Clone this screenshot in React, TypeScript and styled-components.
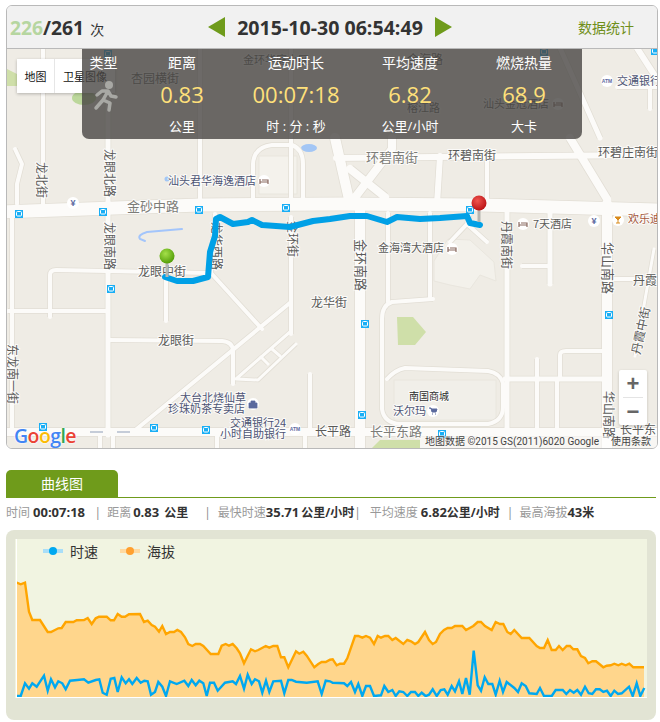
import styled, { createGlobalStyle } from "styled-components";

const FONT = `"Open Sans", "Noto Sans CJK SC", sans-serif`;
const GREEN = "#6f9b1b";

const GlobalStyle = createGlobalStyle`
  body {
    margin: 0;
    background: #fff;
    font-family: ${FONT};
    color: #333;
  }
`;

// map geometry is written in page pixels, the viewBox shifts it into the panel
const roads: { d: string; w: number }[] = [
  { d: "M0 213 L200 206 L340 205 L480 206 L660 211", w: 13 },
  { d: "M43 49 L43 205", w: 4 },
  { d: "M15 150 L22 165 L17 185 L17 205", w: 4 },
  { d: "M108 49 L108 436", w: 5 },
  { d: "M200 49 L200 205", w: 4 },
  { d: "M291 49 L291 205", w: 4 },
  { d: "M291 218 L291 335", w: 4 },
  { d: "M12 218 L12 432", w: 4 },
  { d: "M50 318 L50 276 Q50 271 56 271 L208 274", w: 4 },
  { d: "M8 312 L108 312", w: 4 },
  { d: "M166 274 L166 322", w: 4 },
  { d: "M215 215 L211 274 L262 330", w: 4 },
  { d: "M108 341 L222 342 Q233 343 233 352 L233 385", w: 4 },
  { d: "M133 433 L291 303", w: 4 },
  { d: "M291 332 L236 380 L258 381 L296 345", w: 3 },
  { d: "M261 358 L268 365 M272 350 L280 357", w: 3 },
  { d: "M310 375 L310 432", w: 4 },
  { d: "M0 433 L660 433", w: 8 },
  { d: "M100 433 L100 449 M113 433 L113 449 M217 433 L217 449 M305 433 L305 449 M480 433 L480 449", w: 4 },
  { d: "M253 205 L253 165 Q254 148 272 146 L292 146 Q303 150 303 165 L303 205", w: 4 },
  { d: "M360 205 L360 449", w: 10 },
  { d: "M335 139 L350 205", w: 10 },
  { d: "M392 139 L392 150 L350 205", w: 8 },
  { d: "M350 170 L385 198", w: 8 },
  { d: "M336 159 L650 156", w: 6 },
  { d: "M440 157 L437 205", w: 6 },
  { d: "M487 157 L487 205", w: 4 },
  { d: "M570 139 L607 200", w: 8 },
  { d: "M637 49 L657 80", w: 6 },
  { d: "M650 80 L650 110", w: 4 },
  { d: "M617 88 L660 88", w: 4 },
  { d: "M560 49 L600 139", w: 5 },
  { d: "M607 205 L607 449", w: 10 },
  { d: "M507 214 L507 449", w: 5 },
  { d: "M550 214 L550 285", w: 5 },
  { d: "M522 267 L550 267", w: 4 },
  { d: "M430 214 L430 300", w: 4 },
  { d: "M470 214 L467 225 L450 243 M467 225 L487 243", w: 4 },
  { d: "M388 214 L388 303", w: 4 },
  { d: "M433 300 L392 303 Q382 306 382 320 L382 410 Q384 424 400 425 L488 425 Q503 422 503 408 L503 384 Q500 374 488 372 L405 369 Q395 371 387 380", w: 4 },
  { d: "M505 380 L602 380", w: 5 },
  { d: "M537 360 L537 432 M557 380 L557 432", w: 4 },
  { d: "M560 380 L560 356 Q560 352 566 352 L602 352", w: 4 },
  { d: "M612 280 L657 280", w: 4 },
  { d: "M654 250 L635 357", w: 3 }
];

const route =
  "M165 278 L177 282 L193 282 L208 278 L210 253 L215 237 L216 220 L220 218 L233 225 L248 223 L252 221 L262 226 L290 228 L313 222 L330 220 L350 217 L367 217 L387 223 L397 218 L420 220 L440 219 L467 217 L470 224 L480 226";

const busStops = [
  [19, 215], [103, 213], [199, 211], [286, 209], [111, 290], [470, 211], [365, 325], [362, 416],
  [442, 435], [609, 316], [43, 428], [154, 429], [206, 431], [108, 55], [544, 53], [655, 52]
];

type PoiKind = "bank" | "bar" | "hotel" | "bag" | "cart" | "atm";

const pois: { x: number; y: number; kind: PoiKind }[] = [
  { x: 73, y: 204, kind: "bank" },
  { x: 594, y: 222, kind: "bank" },
  { x: 618, y: 221, kind: "bar" },
  { x: 264, y: 182, kind: "hotel" },
  { x: 452, y: 250, kind: "hotel" },
  { x: 523, y: 225, kind: "hotel" },
  { x: 558, y: 105, kind: "hotel" },
  { x: 253, y: 405, kind: "bag" },
  { x: 433, y: 412, kind: "cart" },
  { x: 607, y: 82, kind: "atm" },
  { x: 295, y: 430, kind: "atm" }
];

type Tone = "road" | "soft" | "poi" | "dark" | "warm";

const labels: { t: string; x: number; y: number; s: number; tone: Tone }[] = [
  { t: "杏园横街", x: 131, y: 84, s: 12, tone: "road" },
  { t: "金环华庭小区", x: 243, y: 65, s: 11, tone: "road" },
  { t: "金海路", x: 407, y: 65, s: 12, tone: "road" },
  { t: "榕江路", x: 407, y: 113, s: 11, tone: "road" },
  { t: "汕头金冠酒店", x: 483, y: 109, s: 11, tone: "road" },
  { t: "交通银行", x: 617, y: 86, s: 11, tone: "poi" },
  { t: "环碧南街", x: 366, y: 163, s: 13, tone: "soft" },
  { t: "环碧南街", x: 448, y: 161, s: 12, tone: "road" },
  { t: "环碧庄南街", x: 598, y: 158, s: 12, tone: "road" },
  { t: "汕头君华海逸酒店", x: 168, y: 186, s: 11, tone: "poi" },
  { t: "金砂中路", x: 127, y: 212, s: 13, tone: "soft" },
  { t: "龙眼中街", x: 138, y: 277, s: 12, tone: "road" },
  { t: "龙华街", x: 311, y: 308, s: 12, tone: "road" },
  { t: "龙眼街", x: 158, y: 346, s: 12, tone: "road" },
  { t: "大台北烧仙草", x: 180, y: 403, s: 11, tone: "poi" },
  { t: "珍珠奶茶专卖店", x: 168, y: 414, s: 11, tone: "poi" },
  { t: "交通银行24", x: 230, y: 428, s: 11, tone: "poi" },
  { t: "小时自助银行", x: 220, y: 439, s: 11, tone: "poi" },
  { t: "长平路", x: 315, y: 437, s: 12, tone: "road" },
  { t: "长平东路", x: 370, y: 437, s: 13, tone: "soft" },
  { t: "长平东", x: 620, y: 435, s: 12, tone: "road" },
  { t: "南国商城", x: 409, y: 401, s: 10, tone: "dark" },
  { t: "沃尔玛", x: 393, y: 416, s: 11, tone: "poi" },
  { t: "金海湾大酒店", x: 378, y: 253, s: 11, tone: "road" },
  { t: "7天酒店", x: 533, y: 229, s: 11, tone: "road" },
  { t: "欢乐迪", x: 628, y: 224, s: 11, tone: "warm" },
  { t: "丹霞", x: 633, y: 286, s: 12, tone: "road" }
];

// road names that run down the map, x is the baseline after the quarter turn
const sideLabels: { t: string; x: number; y: number; s: number }[] = [
  { t: "龙北街", x: 37, y: 163, s: 12 },
  { t: "龙眼北路", x: 105, y: 150, s: 12 },
  { t: "龙眼南路", x: 105, y: 223, s: 12 },
  { t: "金环街", x: 288, y: 222, s: 12 },
  { t: "金环南路", x: 356, y: 240, s: 13 },
  { t: "丹霞南街", x: 502, y: 222, s: 12 },
  { t: "华山南路", x: 603, y: 243, s: 13 },
  { t: "华山南路", x: 604, y: 392, s: 12 },
  { t: "东龙南一街", x: 8, y: 345, s: 12 },
  { t: "龙华西路", x: 212, y: 223, s: 12 }
];

const orangeLeft = [50,68,62,73,75,68,87,155,97,180,120,180,143,216,153,216,175,205,185,204,197,186,220,186,230,181,252,180,263,174,275,192,287,175,297,170,320,170,332,181,342,181,353,162,365,170,375,170,387,163,420,162,432,186,443,182,455,195,465,200,477,215,487,198,498,222,510,216,522,216,532,210,543,216,555,232,565,252,577,258,587,252,600,252,610,258,632,282,655,282,665,257,677,252,687,257,698,252,710,265,720,280,732,310,743,287,753,268,765,274,775,270,797,258,808,263,820,258,832,258,843,292,853,292,865,322,888,274,898,281,910,275,920,287,943,322,955,312,965,306,977,306,990,299];
const orangeRight = [8,298,20,316,30,311,42,311,52,295,75,228,85,228,97,233,108,228,120,233,132,252,143,228,153,233,165,228,175,228,187,240,197,234,220,252,232,240,243,244,255,252,265,246,285,216,297,240,308,252,318,246,330,222,342,210,353,204,365,204,375,198,397,198,408,210,430,198,443,186,453,186,465,198,485,210,497,186,510,192,520,192,532,216,542,222,553,210,575,234,598,234,620,258,630,264,642,264,653,240,665,270,677,270,687,258,698,270,710,258,720,258,730,268,742,268,753,288,765,294,775,310,787,304,798,304,820,322,830,317,842,316,853,311,865,316,875,311,887,316,898,311,910,322,942,322];
const blueLeft = [50,408,62,408,75,370,87,386,97,370,110,380,132,347,143,392,153,358,165,382,175,364,187,370,197,388,210,362,232,360,252,358,265,368,287,360,298,358,308,398,320,404,332,356,343,354,353,396,365,352,377,370,387,358,397,372,410,354,422,368,433,362,443,364,453,404,465,396,475,366,487,380,498,408,510,364,530,372,553,362,565,378,575,360,587,376,598,362,610,370,620,408,630,368,642,368,653,392,675,368,698,364,708,372,720,348,732,386,743,344,755,372,765,358,777,364,787,398,798,362,808,396,820,364,843,362,853,400,865,360,875,360,888,365,920,368,953,364,965,402,977,362,990,364];
const blueRight = [8,368,42,370,52,378,63,366,75,396,85,372,97,408,108,378,120,378,132,408,153,406,163,378,175,396,187,390,197,408,208,394,220,396,232,408,243,396,255,396,265,408,275,398,287,408,297,404,308,388,320,408,332,390,343,388,353,404,365,378,375,394,387,364,397,402,408,354,419,404,431,272,443,376,453,392,464,352,475,372,487,372,497,404,509,362,519,396,530,366,553,384,564,396,575,370,587,378,598,400,620,402,630,384,642,408,665,408,677,390,698,390,709,402,720,390,731,398,742,390,753,404,765,380,776,400,787,402,798,388,809,388,820,396,831,392,842,408,853,392,864,402,875,400,897,380,908,408,920,370,931,408,943,384];

// the curve points were read off two crops at 3x, so they come back to page pixels here
const toLine = (left: number[], right: number[]) => {
  const pts: string[] = [];
  for (let i = 0; i < left.length; i += 2) pts.push(`${(left[i] / 3).toFixed(1)} ${(560 + left[i + 1] / 3).toFixed(1)}`);
  for (let i = 0; i < right.length; i += 2) pts.push(`${(330 + right[i] / 3).toFixed(1)} ${(560 + right[i + 1] / 3).toFixed(1)}`);
  return "M" + pts.join(" L");
};

const orangeLine = toLine(orangeLeft, orangeRight);
const blueLine = toLine(blueLeft, blueRight);

const stats = [
  { title: "距离", value: "0.83", unit: "公里" },
  { title: "运动时长", value: "00:07:18", unit: "时 : 分 : 秒" },
  { title: "平均速度", value: "6.82", unit: "公里/小时" },
  { title: "燃烧热量", value: "68.9", unit: "大卡" }
];

const toneColor: Record<Tone, string> = {
  road: "#5a5a58",
  soft: "#7c7c78",
  poi: "#4d5474",
  dark: "#2c2c2c",
  warm: "#a5583c"
};

const Page = styled.div`
  width: 660px;
  height: 722px;
  box-sizing: border-box;
  padding: 5px 0 0 6px;
  overflow: hidden;
`;

const Panel = styled.section`
  width: 652px;
  box-sizing: border-box;
  border: 1px solid #b9b9b9;
  border-radius: 6px;
  overflow: hidden;
`;

const Header = styled.header`
  height: 43px;
  box-sizing: border-box;
  background: #f1f1f1;
  border-bottom: 1px solid #b9b9b9;
  display: grid;
  grid-template-columns: 150px 1fr 150px;
  align-items: center;
  padding: 0 23px 0 3px;
`;

const Count = styled.div`
  font-size: 19.3px;
  font-weight: 700;
  color: #333;
`;

const Done = styled.span`
  color: #b6d6a0;
`;

const Times = styled.span`
  font-size: 14px;
  font-weight: 400;
  margin-left: 6px;
`;

const DateNav = styled.div`
  display: flex;
  align-items: center;
  justify-content: center;
  gap: 12px;
  padding-left: 16px;
`;

const Arrow = styled.span<{ $dir: "left" | "right" }>`
  width: 0;
  height: 0;
  border-top: 10px solid transparent;
  border-bottom: 10px solid transparent;
  ${(p) => (p.$dir === "left" ? `border-right: 17px solid ${GREEN};` : `border-left: 17px solid ${GREEN};`)}
`;

const DateText = styled.div`
  font-size: 19.6px;
  font-weight: 700;
  color: #333;
  white-space: nowrap;
`;

const StatsLink = styled.div`
  font-size: 14px;
  color: #6f8f1a;
  text-align: right;
`;

const MapArea = styled.div`
  position: relative;
  height: 399px;
  overflow: hidden;
  background: #efece5;
`;

const MapCanvas = styled.svg`
  display: block;
`;

const MapText = styled.text<{ $tone: Tone; $size: number }>`
  font-family: "Noto Sans CJK SC", sans-serif;
  font-size: ${(p) => p.$size}px;
  fill: ${(p) => toneColor[p.$tone]};
  stroke: rgba(255, 255, 255, 0.75);
  stroke-width: 2px;
  paint-order: stroke;
`;

const AtmGlyph = styled.text`
  font-family: "Liberation Sans", sans-serif;
  font-size: 5px;
  font-weight: 700;
  text-anchor: middle;
  fill: #5b6a9e;
`;

const BankGlyph = styled.text`
  font-family: "Liberation Sans", sans-serif;
  font-size: 9px;
  font-weight: 700;
  text-anchor: middle;
  fill: #5b6a9e;
`;

const MapTypes = styled.div`
  position: absolute;
  left: 10px;
  top: 10px;
  display: flex;
  gap: 1px;
  background: #e6e6e6;
  box-shadow: 0 1px 3px rgba(0, 0, 0, 0.25);
`;

const MapType = styled.div<{ $wide?: boolean }>`
  width: ${(p) => (p.$wide ? 60 : 37)}px;
  height: 34px;
  background: #fff;
  font-size: 11px;
  color: #111;
  display: flex;
  align-items: center;
  justify-content: center;
`;

const StatPanel = styled.div`
  position: absolute;
  left: 75px;
  top: 0;
  width: 500px;
  height: 90px;
  box-sizing: border-box;
  background: rgba(72, 70, 68, 0.8);
  border-radius: 0 0 7px 7px;
  display: grid;
  grid-template-columns: 43px repeat(4, 114px);
  color: #fff;
`;

const StatColumn = styled.div`
  display: grid;
  grid-template-rows: 28px 34px 28px;
  justify-items: center;
  align-items: center;
  white-space: nowrap;
`;

const StatTitle = styled.div`
  font-size: 14px;
  line-height: 28px;
`;

const StatValue = styled.div`
  font-size: 22px;
  color: #ffe07a;
`;

const StatUnit = styled.div`
  font-size: 13px;
`;

const Runner = styled.svg`
  align-self: start;
  margin-top: 1px;
`;

const ZoomBox = styled.div`
  position: absolute;
  left: 612px;
  top: 321px;
  width: 28px;
  height: 55px;
  background: #fff;
  border-radius: 2px;
  box-shadow: 0 1px 3px rgba(0, 0, 0, 0.2);
  display: grid;
  grid-template-rows: 1fr 1fr;
  justify-items: center;
  align-items: center;
  font-family: "Liberation Sans", sans-serif;
  font-size: 22px;
  font-weight: 700;
  color: #666;
`;

const ZoomStep = styled.div<{ $split?: boolean }>`
  width: 20px;
  height: 100%;
  display: flex;
  align-items: center;
  justify-content: center;
  ${(p) => p.$split && "border-top: 1px solid #e4e4e4;"}
`;

const Attribution = styled.div`
  position: absolute;
  left: 413px;
  bottom: 0;
  right: 0;
  height: 12px;
  display: flex;
  gap: 12px;
  padding-left: 5px;
  background: rgba(255, 255, 255, 0.55);
  font-family: Roboto, "Noto Sans CJK SC", sans-serif;
  font-size: 10px;
  line-height: 12px;
  color: #444;
  white-space: nowrap;
`;

const GoogleMark = styled.div`
  position: absolute;
  left: 7px;
  bottom: -1px;
  font-family: "Open Sans", sans-serif;
  font-size: 19.5px;
  font-weight: 600;
  line-height: 26px;
  letter-spacing: -0.6px;
  text-shadow: 0 0 2px #fff, 0 0 2px #fff;
`;

const GoogleLetter = styled.span<{ $c: string }>`
  color: ${(p) => p.$c};
`;

const TabBar = styled.div`
  margin-top: 21px;
  width: 650px;
  border-bottom: 1px solid ${GREEN};
`;

const Tab = styled.div`
  width: 112px;
  height: 27px;
  background: ${GREEN};
  border-radius: 5px 5px 0 0;
  color: #fff;
  font-size: 14px;
  line-height: 27px;
  text-align: center;
`;

const Summary = styled.div`
  display: flex;
  align-items: center;
  height: 30px;
  padding-bottom: 2px;
  box-sizing: border-box;
  font-size: 12px;
  white-space: nowrap;
`;

const SummaryLabel = styled.span`
  color: #999;
`;

const SummaryValue = styled.b<{ $gap?: number }>`
  color: #333;
  font-size: 13px;
  margin-left: ${(p) => p.$gap ?? 0}px;
`;

const SummaryUnit = styled.b<{ $gap?: number }>`
  color: #333;
  font-size: 12px;
  margin-left: ${(p) => p.$gap ?? 0}px;
`;

const Separator = styled.span<{ $left: number; $right: number }>`
  color: #888;
  margin: 0 ${(p) => p.$right}px 0 ${(p) => p.$left}px;
`;

const ChartCard = styled.div`
  width: 650px;
  height: 190px;
  margin-top: 2px;
  box-sizing: border-box;
  background: #e2e4d4;
  border-radius: 8px;
  padding: 9px 9px 0;
`;

const ChartInner = styled.div`
  position: relative;
  height: 159px;
  background: #f1f4e1;
`;

const Legend = styled.div`
  position: absolute;
  left: 28px;
  top: 2px;
  display: flex;
  gap: 22px;
  font-size: 14px;
  color: #333;
`;

const LegendItem = styled.div`
  display: flex;
  align-items: center;
  gap: 7px;
`;

const LegendSwatch = styled.span<{ $c: string; $soft: string }>`
  position: relative;
  width: 20px;
  height: 4px;
  background: ${(p) => p.$soft};

  &::after {
    content: "";
    position: absolute;
    left: 6px;
    top: -2px;
    width: 8px;
    height: 8px;
    border-radius: 50%;
    background: ${(p) => p.$c};
  }
`;

const ChartSvg = styled.svg`
  display: block;
`;

const googleLetters = [
  ["G", "#4285f4"],
  ["o", "#ea4335"],
  ["o", "#fbbc05"],
  ["g", "#4285f4"],
  ["l", "#34a853"],
  ["e", "#ea4335"]
];

function BusStop({ x, y }: { x: number; y: number }) {
  return (
    <g>
      <rect x={x - 4} y={y - 4} width={8} height={8} fill="#19aef5" />
      <rect x={x - 2.5} y={y - 2.5} width={5} height={4.5} rx={1} fill="none" stroke="#fff" strokeWidth={1} />
    </g>
  );
}

function Poi({ x, y, kind }: { x: number; y: number; kind: PoiKind }) {
  return (
    <g>
      <circle cx={x} cy={y} r={6} fill="#fff" />
      {kind === "bank" && (
        <BankGlyph x={x} y={y + 3}>
          ¥
        </BankGlyph>
      )}
      {kind === "atm" && (
        <AtmGlyph x={x} y={y + 2}>
          ATM
        </AtmGlyph>
      )}
      {kind === "bar" && <path d={`M${x - 3} ${y - 3} H${x + 3} L${x} ${y} Z M${x} ${y} V${y + 3} M${x - 2} ${y + 3} H${x + 2}`} fill="#d98a1a" stroke="#d98a1a" />}
      {kind === "hotel" && <path d={`M${x - 4} ${y - 2} V${y + 3} M${x - 4} ${y + 1} H${x + 4} V${y + 3} M${x - 2} ${y - 1} H${x + 4} V${y + 1}`} fill="none" stroke="#8a6a60" strokeWidth={1.2} />}
      {kind === "bag" && <path d={`M${x - 4} ${y - 1} H${x + 4} V${y + 4} H${x - 4} Z M${x - 2} ${y - 1} V${y - 3} H${x + 2} V${y - 1}`} fill="#5b6a9e" stroke="#5b6a9e" strokeWidth={0.8} />}
      {kind === "cart" && <path d={`M${x - 4} ${y - 3} H${x - 2} L${x - 1} ${y + 1} H${x + 3} L${x + 4} ${y - 2} H${x - 2} M${x - 1} ${y + 3} h1 M${x + 2} ${y + 3} h1`} fill="#5b6a9e" stroke="#5b6a9e" strokeWidth={1} />}
    </g>
  );
}

function Pin({ x, y, stem, fill }: { x: number; y: number; stem: number; fill: string }) {
  return (
    <g>
      <rect x={x - 1.5} y={y + 5} width={3} height={stem} fill="#b5b5b0" />
      <circle cx={x} cy={y} r={7.5} fill={`url(#${fill})`} />
    </g>
  );
}

function MapDrawing() {
  return (
    <MapCanvas width={650} height={400} viewBox="7 50 650 400">
      <defs>
        <radialGradient id="pinGreen" cx="40%" cy="35%" r="70%">
          <stop offset="0%" stopColor="#a5e04a" />
          <stop offset="100%" stopColor="#4f9a05" />
        </radialGradient>
        <radialGradient id="pinRed" cx="40%" cy="35%" r="70%">
          <stop offset="0%" stopColor="#f0554f" />
          <stop offset="100%" stopColor="#b80f12" />
        </radialGradient>
      </defs>

      <path d="M397 318 L413 318 L426 333 L415 346 L398 346 Z" fill="#cfdfa9" />
      <path d="M7 70 L17 75 L17 87 L7 87 Z" fill="#cfdfa9" />
      <ellipse cx={84} cy={99} rx={12} ry={7} fill="#bcd79b" />
      <path d="M380 441 L420 441 L420 449 L372 449 Z" fill="#cfdfa9" />
      <ellipse cx={309} cy={149} rx={8} ry={4} fill="#a3c6f5" />
      <circle cx={167} cy={180} r={2.5} fill="#a3c6f5" />
      <path d="M182 230 L147 233 Q137 236 140 240 L145 242" fill="none" stroke="#a3c5fb" strokeWidth={2} strokeLinecap="round" />

      <rect x={259} y={157} width={38} height={38} fill="#f4f2ec" stroke="#e9e6de" />
      <path d="M434 262 L448 240 L470 241 L494 263 L496 282 L480 276 L470 290 L450 286 L434 282 Z" fill="#f3f1eb" stroke="#e9e6de" />
      <rect x={394} y={381} width={102} height={40} fill="#f1efe9" stroke="#e9e6de" />

      {roads.map((r, i) => (
        <path key={`c${i}`} d={r.d} fill="none" stroke="#e2ded5" strokeWidth={r.w + 1.5} strokeLinejoin="round" />
      ))}
      {roads.map((r, i) => (
        <path key={`r${i}`} d={r.d} fill="none" stroke="#fcfbf9" strokeWidth={r.w} strokeLinejoin="round" strokeLinecap="round" />
      ))}

      <path d="M90 433 L103 433 M117 433 L130 433" stroke="#c5ccd8" strokeWidth={2} />

      {busStops.map(([x, y], i) => (
        <BusStop key={i} x={x} y={y} />
      ))}

      {pois.map((p, i) => (
        <Poi key={i} x={p.x} y={p.y} kind={p.kind} />
      ))}

      {labels.map((l, i) => (
        <MapText key={i} $tone={l.tone} $size={l.s} x={l.x} y={l.y}>
          {l.t}
        </MapText>
      ))}
      {sideLabels.map((l, i) => (
        <MapText key={i} $tone="road" $size={l.s} transform={`translate(${l.x} ${l.y}) rotate(90)`}>
          {l.t}
        </MapText>
      ))}
      <MapText $tone="road" $size={12} transform="translate(640 356) rotate(-78)">
        丹霞中街
      </MapText>

      <path d={route} fill="none" stroke="#00a0e6" strokeWidth={6} strokeLinecap="round" strokeLinejoin="round" />
      <Pin x={167} y={257} stem={16} fill="pinGreen" />
      <Pin x={479} y={204} stem={14} fill="pinRed" />
    </MapCanvas>
  );
}

export default function App() {
  return (
    <Page>
      <GlobalStyle />
      <Panel>
        <Header>
          <Count>
            <Done>226</Done>/261<Times>次</Times>
          </Count>
          <DateNav>
            <Arrow $dir="left" />
            <DateText>2015-10-30 06:54:49</DateText>
            <Arrow $dir="right" />
          </DateNav>
          <StatsLink>数据统计</StatsLink>
        </Header>
        <MapArea>
          <MapDrawing />
          <MapTypes>
            <MapType>地图</MapType>
            <MapType $wide>卫星图像</MapType>
          </MapTypes>
          <StatPanel>
            <StatColumn>
              <StatTitle>类型</StatTitle>
              <Runner width={30} height={34} viewBox="0 0 30 34">
                <circle cx={20} cy={7} r={4} fill="#a8a8a4" />
                <path
                  d="M19 13 L14 22 L7 30 M14 22 L21 25 L20 32 M8 17 L13 13 L19 13 L22 18 L27 19"
                  fill="none"
                  stroke="#a8a8a4"
                  strokeWidth={3.5}
                  strokeLinecap="round"
                  strokeLinejoin="round"
                />
              </Runner>
            </StatColumn>
            {stats.map((s) => (
              <StatColumn key={s.title}>
                <StatTitle>{s.title}</StatTitle>
                <StatValue>{s.value}</StatValue>
                <StatUnit>{s.unit}</StatUnit>
              </StatColumn>
            ))}
          </StatPanel>
          <ZoomBox>
            <ZoomStep>+</ZoomStep>
            <ZoomStep $split>−</ZoomStep>
          </ZoomBox>
          <GoogleMark>
            {googleLetters.map(([ch, c], i) => (
              <GoogleLetter key={i} $c={c}>
                {ch}
              </GoogleLetter>
            ))}
          </GoogleMark>
          <Attribution>
            <span>地图数据 ©2015 GS(2011)6020 Google</span>
            <span>使用条款</span>
          </Attribution>
        </MapArea>
      </Panel>

      <TabBar>
        <Tab>曲线图</Tab>
      </TabBar>
      <Summary>
        <SummaryLabel>时间</SummaryLabel>
        <SummaryValue $gap={3}>00:07:18</SummaryValue>
        <Separator $left={9.5} $right={6}>|</Separator>
        <SummaryLabel>距离</SummaryLabel>
        <SummaryValue $gap={2}>0.83</SummaryValue>
        <SummaryUnit $gap={5}>公里</SummaryUnit>
        <Separator $left={16} $right={7}>|</Separator>
        <SummaryLabel>最快时速</SummaryLabel>
        <SummaryValue>35.71</SummaryValue>
        <SummaryUnit $gap={2}>公里/小时</SummaryUnit>
        <Separator $left={0} $right={9}>|</Separator>
        <SummaryLabel>平均速度</SummaryLabel>
        <SummaryValue $gap={3}>6.82</SummaryValue>
        <SummaryUnit>公里/小时</SummaryUnit>
        <Separator $left={7} $right={6}>|</Separator>
        <SummaryLabel>最高海拔</SummaryLabel>
        <SummaryValue>43</SummaryValue>
        <SummaryUnit>米</SummaryUnit>
      </Summary>
      <ChartCard>
        <ChartInner>
          <ChartSvg width={632} height={159} viewBox="15 539 632 159">
            <path d={`${orangeLine} L644 697 L17 697 Z`} fill="#ffd68c" />
            <path d={orangeLine} fill="none" stroke="#ffa500" strokeWidth={2.4} />
            <path d={blueLine} fill="none" stroke="#00a8f0" strokeWidth={2.4} />
            <path d="M16 697.5 L647 697.5" stroke="#fff" strokeWidth={1} />
            <path d="M16.5 539 L16.5 697" stroke="#fff" strokeWidth={1} />
          </ChartSvg>
          <Legend>
            <LegendItem>
              <LegendSwatch $c="#00a8f0" $soft="#a9def8" />
              时速
            </LegendItem>
            <LegendItem>
              <LegendSwatch $c="#ffa030" $soft="#ffd9a0" />
              海拔
            </LegendItem>
          </Legend>
        </ChartInner>
      </ChartCard>
    </Page>
  );
}
